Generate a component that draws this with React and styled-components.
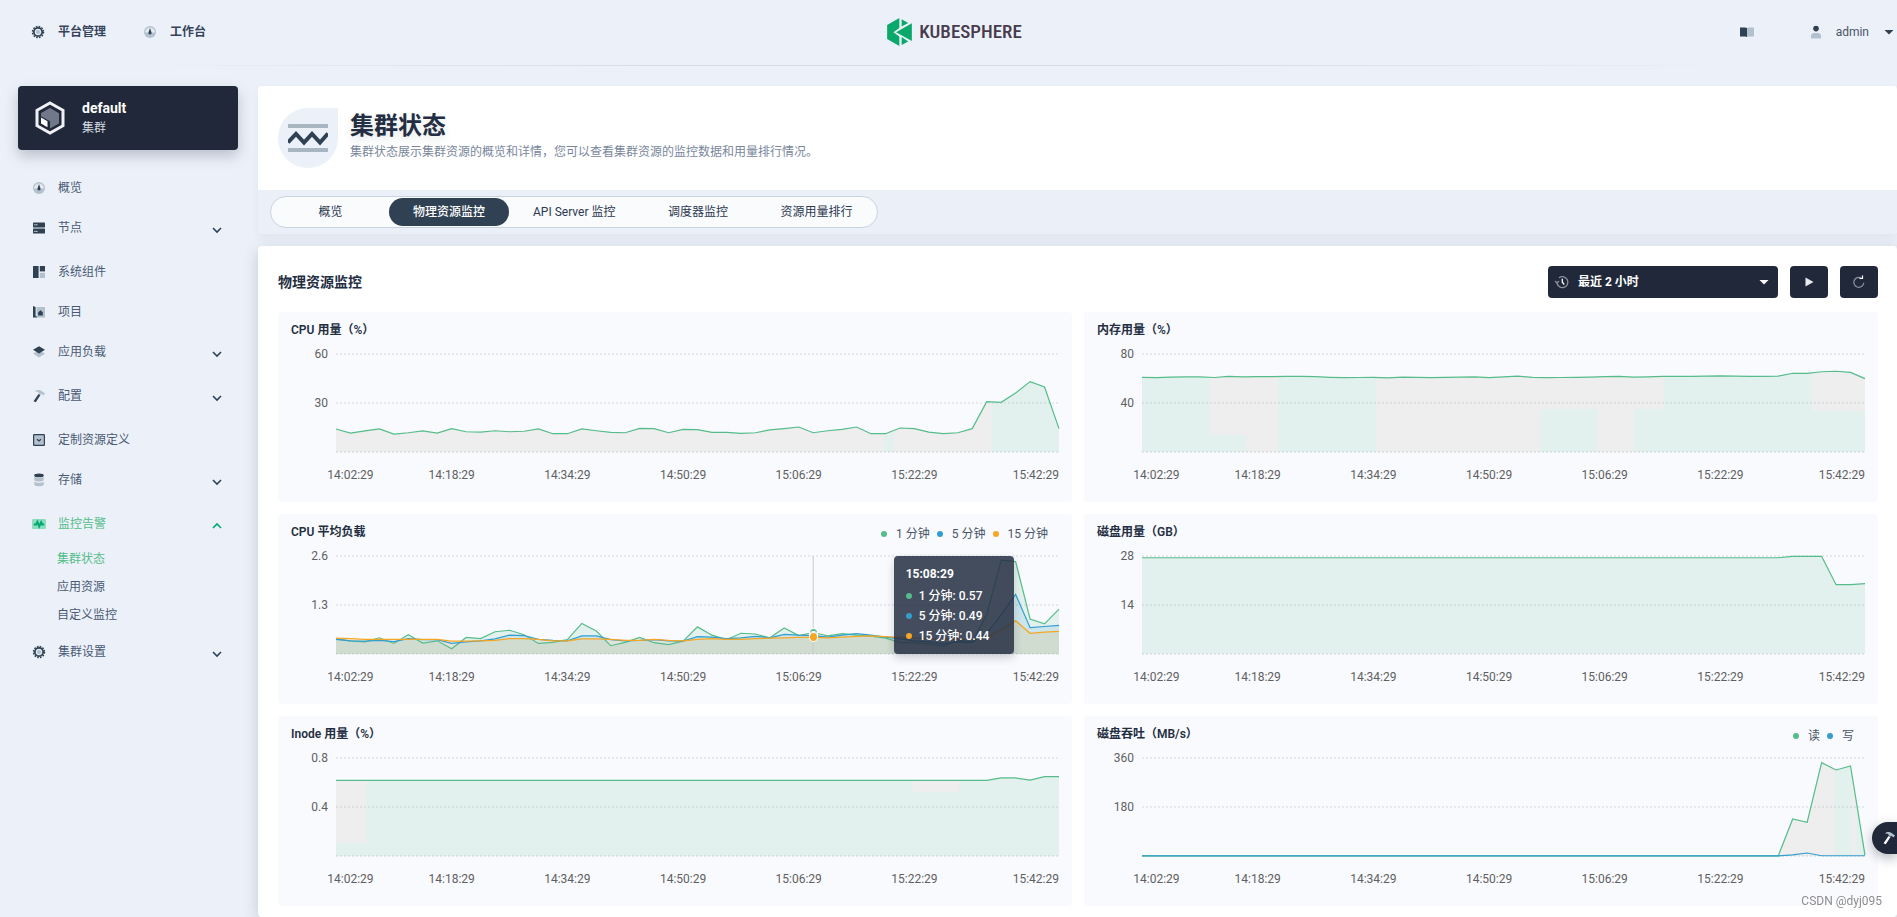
import React, { useId } from 'react';
import styled, { createGlobalStyle, css } from 'styled-components';

const GlobalStyle = createGlobalStyle`
  *, *::before, *::after { box-sizing: border-box; }
  html, body { margin: 0; padding: 0; }
  body {
    background: #ecf1f9;
    color: #242e42;
    font-family: Roboto, "Noto Sans CJK SC", sans-serif;
    font-size: 12px;
    line-height: 20px;
  }
  h1, h2, h3, p, ul { margin: 0; padding: 0; }
  ul { list-style: none; }
  a { color: inherit; text-decoration: none; }
  button, select { font: inherit; cursor: pointer; }
  svg { display: block; flex: none; }
`;

/* ---------- icons ---------- */

const DARK = '#2f4153';
const LIGHT = '#b3c0cd';

const paths = {
  gear: (
    <>
      <circle cx="8" cy="8" r="4.2" fill={LIGHT} stroke="currentColor" strokeWidth="1.7" />
      <circle cx="8" cy="8" r="5.5" fill="none" stroke="currentColor" strokeWidth="1.5" strokeDasharray="1.64 1.24" />
      <circle cx="8" cy="8" r="2.6" fill={LIGHT} stroke="#e9eff6" strokeWidth="1" />
    </>
  ),
  dashboard: (
    <>
      <circle cx="8" cy="8" r="6" fill={LIGHT} />
      <path d="M3 8.6a5 5 0 0 1 10 0z" fill="#e3eaf1" />
      <path d="M8 4l1.5 4.4a1.6 1.6 0 1 1-3 0z" fill="currentColor" />
    </>
  ),
  nodes: (
    <>
      <rect x="2" y="2.6" width="12" height="5" rx=".6" fill="currentColor" />
      <rect x="2" y="8.6" width="12" height="5" rx=".6" fill="currentColor" />
      <path d="M3.3 4.8h1.2M5.2 4.8h1.2M3.3 11.4h1.2M5.2 11.4h1.2" stroke="#fff" strokeWidth="1" />
    </>
  ),
  components: (
    <>
      <rect x="2" y="2" width="5.6" height="12" fill="currentColor" />
      <rect x="8.8" y="2" width="5.2" height="5.4" fill="currentColor" />
      <rect x="8.8" y="8.8" width="5.2" height="5.2" fill={LIGHT} />
    </>
  ),
  project: (
    <>
      <rect x="5.6" y="3" width="8.4" height="10.6" fill={LIGHT} />
      <path d="M2 2l2.6 1v9.2l1.4.4v1H2z" fill="currentColor" />
      <path d="M7.2 11.6V8.2l2.3-2 2.3 2v3.4z" fill="currentColor" />
    </>
  ),
  workload: (
    <>
      <path d="M2 9.6L8 6.4l6 3.2-6 3.8z" fill={LIGHT} />
      <path d="M2 5.8L8 2.2l6 3.6-6 3.6z" fill="currentColor" />
    </>
  ),
  hammer: (
    <>
      <path d="M4 3.4C6 1.4 9 1.6 10.6 3l3.4 2.6-1.6 2-1.8-1.5-1.4.4L7.6 5 7 3.7z" fill={LIGHT} />
      <path d="M7.5 6l2 1.1-4.7 7.1-2.3-.9z" fill="currentColor" />
    </>
  ),
  crd: (
    <>
      <rect x="2.6" y="2.6" width="10.8" height="10.8" rx=".6" fill={LIGHT} stroke="currentColor" strokeWidth="1.2" />
      <path d="M6 7.2l2 1.8 2-1.8" fill="none" stroke="currentColor" strokeWidth="1.2" />
    </>
  ),
  storage: (
    <>
      <path d="M3.2 9.8c2.4 1.4 7.2 1.4 9.6 0v3c-1.6 2-8 2-9.6 0z" fill={LIGHT} />
      <path d="M3.2 5c2.4 1.4 7.2 1.4 9.6 0v3.2c-1.6 1.8-8 1.8-9.6 0z" fill={LIGHT} />
      <ellipse cx="8" cy="3.4" rx="4.8" ry="1.9" fill="currentColor" />
    </>
  ),
  monitor: (
    <>
      <rect x="1" y="3" width="14" height="10" rx="1.2" fill="#8edcc0" />
      <path d="M2.8 8.4h2.4l1.2-2.6 1.8 4.6 2-4.2 1 2.2h2" fill="none" stroke="#00aa72" strokeWidth="2" />
    </>
  ),
  book: (
    <>
      <path d="M1 3.4h5.2L8 4v9l-1.800-.6H1z" fill="currentColor" />
      <path d="M15 3.4H9.8L8 4v9l1.800-.6H15z" fill={LIGHT} />
    </>
  ),
  user: (
    <>
      <circle cx="8" cy="4.6" r="2.8" fill="currentColor" />
      <path d="M3 14.4V12c0-1.8 1.4-3 3.2-3h3.6c1.8 0 3.2 1.2 3.2 3v2.4z" fill={LIGHT} />
    </>
  ),
  chevronDown: <path d="M4 8l4 4 4-4" fill="none" stroke="currentColor" strokeWidth="1.6" />,
  chevronUp: <path d="M4 12l4-4 4 4" fill="none" stroke="currentColor" strokeWidth="1.6" />,
  caret: <path d="M3.5 6h9L8 10.5z" fill="currentColor" />,
  play: <path d="M4.5 3.5L12.5 8l-8 4.5z" fill="#e8eaee" />,
  refresh: (
    <>
      <path d="M12.8 8.8A5 5 0 1 1 9.5 3.6" fill="none" stroke="#8c93a0" strokeWidth="1.2" />
      <path d="M8.500 4.400h3V1.400" fill="none" stroke="#fff" strokeWidth="1.2" />
    </>
  ),
  clock: (
    <>
      <path d="M2.9 8.4A5.5 5.5 0 1 0 5 3.8" fill="none" stroke="#8c93a0" strokeWidth="1.3" />
      <path d="M1 7l2 2 2-2" fill="none" stroke="#8c93a0" strokeWidth="1.2" />
      <path d="M8.3 4.8v3.5l2 2.2" fill="none" stroke="#fff" strokeWidth="1.3" />
    </>
  ),
};

function Icon({ name, size = 16, color = DARK }) {
  return (
    <svg width={size} height={size} viewBox="0 0 16 16" color={color} aria-hidden="true">
      {paths[name]}
    </svg>
  );
}

/* ---------- header ---------- */

const Header = styled.header`
  display: grid;
  grid-template-columns: 1fr auto 1fr;
  align-items: center;
  height: 66px;
  padding: 0 0 2px 12px;
  background: linear-gradient(90deg, transparent 6%, #d3dae4 38%, #d3dae4 60%, transparent 93%) bottom / 100% 1px no-repeat;
`;

const HeaderNav = styled.nav`
  display: flex;
  gap: 36px;
  padding-left: 18px;
`;

const HeaderLink = styled.a`
  display: flex;
  align-items: center;
  gap: 12px;
  color: #36435c;
  font-weight: 600;
`;

const Brand = styled.a`
  display: flex;
  align-items: center;
  gap: 7px;
  color: #473b4d;
  font-family: "Liberation Sans Narrow", "Roboto Condensed", Roboto, sans-serif;
  font-size: 19px;
  font-weight: 500;
`;

const HeaderTools = styled.div`
  display: flex;
  align-items: center;
  justify-content: flex-end;
  gap: 53px;
`;

const PlainButton = styled.button`
  display: flex;
  align-items: center;
  padding: 0;
  border: 0;
  background: none;
  color: #4a5568;
`;

const UserButton = styled(PlainButton)`
  gap: 12px;
`;

/* ---------- sidebar ---------- */

const Body = styled.div`
  display: flex;
  flex: 1;
  padding: 20px 0 0 18px;
  gap: 20px;
`;

const Sidebar = styled.aside`
  flex: none;
  width: 220px;
`;

const ClusterButton = styled.button`
  display: flex;
  align-items: center;
  gap: 16px;
  width: 100%;
  height: 64px;
  padding: 0 16px;
  border: 0;
  border-radius: 4px;
  background: #202839;
  box-shadow: 0 6px 14px rgba(36, 46, 66, 0.25);
  color: #fff;
  text-align: left;
  strong { display: block; font-size: 14px; font-weight: 700; }
  span span { display: block; color: #d5dae2; }
`;

const NavList = styled.ul`
  padding-top: 18px;
`;

const NavItem = styled.li`
  padding-bottom: ${(p) => (p.$open ? '3px' : p.$group ? '4px' : '0')};
`;

const NavRow = styled.a`
  display: flex;
  align-items: center;
  gap: 11px;
  height: 40px;
  padding: 0 13px;
  color: ${(p) => (p.$active ? '#55bc8a' : '#4a5974')};
  & > span { flex: 1; }
`;

const SubList = styled.ul`
  padding-top: 1px;
`;

const SubLink = styled.a`
  display: block;
  padding-left: 39px;
  line-height: 28px;
  color: ${(p) => (p.$active ? '#55bc8a' : '#4a5974')};
`;

/* ---------- main ---------- */

const Main = styled.main`
  display: flex;
  flex: 1;
  flex-direction: column;
  gap: 12px;
  min-width: 0;
`;

const panel = css`
  border-radius: 4px;
  background: #fff;
`;

const Banner = styled.section`
  ${panel}
  overflow: hidden;
  box-shadow: 0 4px 8px rgba(36, 46, 66, 0.06);
`;

const BannerHead = styled.div`
  display: flex;
  gap: 12px;
  padding: 22px 20px;
`;

const BannerIcon = styled.div`
  display: grid;
  place-items: center;
  width: 60px;
  height: 60px;
  border-radius: 30px 0 30px 30px;
  background: #ecf1f9;
`;

const BannerTitle = styled.h1`
  font-size: 24px;
  font-weight: 700;
  line-height: 36px;
  text-shadow: 0 4px 8px rgba(36, 46, 66, 0.12);
`;

const BannerText = styled.p`
  color: #79879c;
  line-height: 16px;
`;

const TabBar = styled.div`
  display: flex;
  padding: 6px 12px;
  background: #ebf0f8;
`;

const Tabs = styled.div`
  display: flex;
  padding: 1px;
  border: 1px solid #c9d3df;
  border-radius: 16px;
  background: #fafbfd;
`;

const Tab = styled.button`
  height: 28px;
  min-width: 117px;
  padding: 0 24px;
  border: 0;
  border-radius: 14px;
  background: ${(p) => (p.$active ? DARK : 'transparent')};
  color: ${(p) => (p.$active ? '#fff' : '#2c3850')};
  font-weight: ${(p) => (p.$active ? 500 : 400)};
`;

const Content = styled.section`
  ${panel}
  flex: 1;
  padding: 20px 19px 11px 20px;
  box-shadow: 0 4px 16px rgba(36, 46, 66, 0.2);
`;

const Toolbar = styled.div`
  display: flex;
  align-items: center;
  gap: 12px;
  padding-bottom: 14px;
`;

const SectionTitle = styled.h2`
  flex: 1;
  font-size: 14px;
  font-weight: 600;
`;

const RangeBox = styled.label`
  display: flex;
  align-items: center;
  gap: 8px;
  width: 230px;
  height: 32px;
  padding: 0 6px;
  border-radius: 4px;
  background: #202839;
`;

const RangeSelect = styled.select`
  flex: 1;
  height: 32px;
  padding: 0;
  border: 0;
  outline: 0;
  appearance: none;
  background: transparent;
  color: #fff;
  font-weight: 700;
`;

const DarkButton = styled.button`
  display: grid;
  place-items: center;
  width: 38px;
  height: 32px;
  padding: 0;
  border: 0;
  border-radius: 4px;
  background: #202839;
`;

const ChartGrid = styled.div`
  display: grid;
  grid-template-columns: repeat(2, minmax(0, 1fr));
  gap: 12px;
`;

const Card = styled.article`
  padding: 8px 13px 17px;
  border-radius: 4px;
  background: #f9fafd;
`;

const CardHead = styled.div`
  display: flex;
  justify-content: space-between;
  padding: 0 11px 14px 0;
`;

const CardTitle = styled.h3`
  font-size: 12px;
  font-weight: 600;
`;

const Legend = styled.ul`
  display: flex;
  gap: 7px;
  padding-top: 2px;
  margin-bottom: -2px;
  color: #4a5568;
`;

const Key = styled.li`
  display: flex;
  align-items: center;
  gap: ${(p) => p.$gap || '9px'};
  &::before {
    content: '';
    width: 6px;
    height: 6px;
    border-radius: 50%;
    background: ${(p) => p.$color};
  }
`;

const ChartBody = styled.div`
  display: grid;
  grid-template-columns: 37px minmax(0, 1fr);
  column-gap: 8px;
  row-gap: 13px;
  color: #5f5f62;
`;

const YAxis = styled.div`
  display: grid;
  grid-auto-rows: 49px;
  height: 98px;
  margin-top: -8px;
  line-height: 16px;
  text-align: right;
`;

const Plot = styled.div`
  position: relative;
  height: 98px;
  & > svg { width: 100%; height: 98px; overflow: visible; }
`;

const XAxis = styled.div`
  display: grid;
  grid-column: 2;
  grid-template-columns: minmax(0, 2fr) minmax(0, 2fr) repeat(5, minmax(0, 8fr)) minmax(0, 6fr);
  & > span { justify-self: center; }
  & > :first-child { grid-column: 1; }
  & > :nth-child(2) { grid-column: 3; }
  & > :last-child { justify-self: end; }
`;

const Marker = styled.span`
  position: absolute;
  width: 9px;
  height: 10px;
  margin: -5px 0 0 -4px;
  border: 1px solid #fff;
  border-radius: 50%;
  background: ${(p) => p.$color};
`;

const Tooltip = styled.div`
  position: absolute;
  top: 0;
  left: calc(77% + 1px);
  width: 120px;
  height: 98px;
  padding: 8px 12px;
  border-radius: 4px;
  background: rgba(36, 46, 66, 0.85);
  box-shadow: 0 4px 8px rgba(36, 46, 66, 0.2);
  color: #fff;
  font-weight: 500;
  strong { display: block; padding-bottom: 2px; }
`;

const FloatButton = styled.button`
  position: fixed;
  right: 0;
  bottom: 63px;
  display: flex;
  align-items: center;
  width: 25px;
  height: 32px;
  padding: 0 0 0 9px;
  border: 0;
  border-radius: 16px 0 0 16px;
  background: #202839;
  box-shadow: 0 4px 12px rgba(36, 46, 66, 0.35);
`;

const Watermark = styled.div`
  position: fixed;
  right: 15px;
  bottom: 6px;
  color: #8d8d90;
  text-shadow: 1px 1px 0 #fff;
`;

/* ---------- data ---------- */

const GREEN = '#55bc8a';
const BLUE = '#329dce';
const ORANGE = '#f5a623';
const repeat = (n, v) => Array(n).fill(v);

const times = ['14:02:29', '14:18:29', '14:34:29', '14:50:29', '15:06:29', '15:22:29', '15:42:29'];

const charts = [
  {
    title: 'CPU 用量（%）',
    max: 60,
    shades: [[0, 37.9, 0, 98], [38.6, 45.3, 0, 98]],
    series: [{
      color: GREEN,
      values: [14.1, 11.6, 12.9, 14.1, 11, 11.8, 12.9, 11.6, 14.3, 12.4, 12.2, 13, 12.4, 12.7, 14.1, 11.2, 11.2, 14.1, 13, 12, 11.8, 14.5, 14.3, 11.8, 13.9, 13.7, 12, 12, 11.4, 11.8, 13.5, 14.3, 15.3, 11.8, 13, 13.9, 15.3, 11.2, 11.2, 14.7, 14.3, 12.2, 11.2, 11.8, 14.3, 30.8, 30.4, 36.1, 43.1, 39.8, 14.3],
    }],
  },
  {
    title: '内存用量（%）',
    max: 80,
    shades: [[4.7, 7.2, 0, 81], [7.2, 9.4, 0, 98], [16.2, 27.5, 0, 98], [27.5, 31.5, 0, 55], [31.5, 34, 0, 98], [34, 36.1, 0, 55], [46.3, 50, 0, 57]],
    series: [{
      color: GREEN,
      values: [61, 60.7, 61.2, 61.3, 61.4, 60.8, 61.7, 61.3, 61.6, 61.6, 61.7, 61.8, 61.5, 61, 60.7, 60.8, 61, 60.5, 61.2, 60.9, 60.7, 60.9, 61.2, 61.4, 60.7, 61.3, 61.9, 61, 60.7, 60.8, 61, 61.2, 61.6, 61.8, 61.1, 61.4, 61.7, 61.7, 61.7, 62, 62.1, 61.9, 61.7, 61.7, 62, 64.3, 64.2, 65.5, 65.9, 65, 59.9],
    }],
  },
  {
    title: 'CPU 平均负载',
    max: 2.6,
    shades: [],
    active: 33,
    activeTime: '15:08:29',
    series: [
      {
        name: '1 分钟', color: GREEN,
        values: [0.4, 0.35, 0.32, 0.43, 0.28, 0.51, 0.29, 0.35, 0.14, 0.44, 0.41, 0.59, 0.63, 0.51, 0.28, 0.31, 0.38, 0.81, 0.61, 0.22, 0.31, 0.44, 0.3, 0.25, 0.34, 0.72, 0.5, 0.38, 0.55, 0.53, 0.43, 0.69, 0.49, 0.57, 0.48, 0.54, 0.5, 0.47, 0.42, 0.31, 0.3, 0.26, 0.21, 0.37, 0.32, 1.05, 2.49, 2.45, 0.93, 0.8, 1.19],
      },
      {
        name: '5 分钟', color: BLUE,
        values: [0.39, 0.35, 0.34, 0.36, 0.33, 0.41, 0.38, 0.38, 0.28, 0.32, 0.35, 0.4, 0.5, 0.49, 0.39, 0.36, 0.35, 0.48, 0.48, 0.38, 0.35, 0.36, 0.38, 0.35, 0.34, 0.46, 0.45, 0.41, 0.43, 0.47, 0.43, 0.52, 0.5, 0.49, 0.45, 0.5, 0.54, 0.5, 0.45, 0.4, 0.35, 0.32, 0.27, 0.32, 0.31, 0.55, 1.04, 1.58, 0.7, 0.73, 0.76],
      },
      {
        name: '15 分钟', color: ORANGE,
        values: [0.42, 0.41, 0.39, 0.39, 0.39, 0.39, 0.39, 0.39, 0.34, 0.34, 0.35, 0.36, 0.41, 0.41, 0.39, 0.35, 0.35, 0.4, 0.4, 0.39, 0.36, 0.36, 0.39, 0.36, 0.35, 0.39, 0.41, 0.39, 0.39, 0.41, 0.42, 0.43, 0.44, 0.44, 0.43, 0.45, 0.47, 0.48, 0.46, 0.44, 0.42, 0.41, 0.39, 0.39, 0.39, 0.44, 0.64, 0.88, 0.55, 0.58, 0.6],
      },
    ],
  },
  {
    title: '磁盘用量（GB）',
    max: 28,
    shades: [],
    series: [{ color: GREEN, values: [...repeat(45, 27.5), 27.9, 27.9, 27.9, 19.8, 19.8, 20.1] }],
  },
  {
    title: 'Inode 用量（%）',
    max: 0.8,
    shades: [[0, 2.1, 0, 85], [39.9, 43.1, 0, 34]],
    series: [{ color: GREEN, values: [...repeat(46, 0.618), 0.637, 0.637, 0.62, 0.648, 0.648] }],
  },
  {
    title: '磁盘吞吐（MB/s）',
    max: 360,
    shades: [[44, 47.9, 0, 98], [49.1, 49.4, 0, 98]],
    series: [
      { name: '读', color: GREEN, values: [...repeat(45, 0.5), 136, 124, 343, 316, 331, 3] },
      { name: '写', color: BLUE, values: [...repeat(45, 0.5), 4, 11, 1, 1, 1, 1] },
    ],
  },
];

const nav = [
  { label: '概览', icon: 'dashboard' },
  { label: '节点', icon: 'nodes', group: true },
  { label: '系统组件', icon: 'components' },
  { label: '项目', icon: 'project' },
  { label: '应用负载', icon: 'workload', group: true },
  { label: '配置', icon: 'hammer', group: true },
  { label: '定制资源定义', icon: 'crd' },
  { label: '存储', icon: 'storage', group: true },
  { label: '监控告警', icon: 'monitor', group: true, open: true, children: ['集群状态', '应用资源', '自定义监控'] },
  { label: '集群设置', icon: 'gear', group: true },
];

const tabs = ['概览', '物理资源监控', 'API Server 监控', '调度器监控', '资源用量排行'];

/* ---------- chart ---------- */

const HEIGHT = 98;

function Chart({ title, max, series, shades, active, activeTime }) {
  const clipId = useId();
  const yOf = (v) => HEIGHT - (v / max) * HEIGHT;
  const line = (values) => values.map((v, i) => `${i},${yOf(v).toFixed(2)}`).join(' ');
  const area = (values) => `0,${HEIGHT} ${line(values)} 50,${HEIGHT}`;
  const named = series.filter((s) => s.name);

  return (
    <Card>
      <CardHead>
        <CardTitle>{title}</CardTitle>
        {named.length > 0 && (
          <Legend>
            {named.map((s) => <Key key={s.name} $color={s.color}>{s.name}</Key>)}
          </Legend>
        )}
      </CardHead>
      <ChartBody>
        <YAxis>
          <span>{max}</span>
          <span>{max / 2}</span>
        </YAxis>
        <Plot>
          <svg viewBox={`0 0 50 ${HEIGHT}`} preserveAspectRatio="none" role="img" aria-label={title}>
            <clipPath id={clipId}>
              <polygon points={area(series[0].values)} />
            </clipPath>
            {series.map((s) => (
              <polygon key={s.color} points={area(s.values)} fill={s.color} fillOpacity="0.13" />
            ))}
            <g clipPath={`url(#${clipId})`}>
              {shades.map(([x0, x1, y0, y1]) => (
                <rect key={x0} x={x0} y={y0} width={x1 - x0} height={y1 - y0} fill="#eeeeee" />
              ))}
            </g>
            {[0, HEIGHT / 2, HEIGHT].map((y) => (
              <line key={y} x1="0" x2="50" y1={y} y2={y} stroke="#8c96a5" strokeOpacity="0.24" strokeWidth="1.5" strokeDasharray="2 2" vectorEffect="non-scaling-stroke" />
            ))}
            {active !== undefined && (
              <line x1={active} x2={active} y1="0" y2={HEIGHT} stroke="#cccccc" vectorEffect="non-scaling-stroke" />
            )}
            {series.map((s) => (
              <polyline key={s.color} points={line(s.values)} fill="none" stroke={s.color} strokeWidth="1.2" vectorEffect="non-scaling-stroke" />
            ))}
          </svg>
          {active !== undefined && (
            <>
              {series.map((s) => (
                <Marker key={s.name} $color={s.color} style={{ left: `${active * 2}%`, top: yOf(s.values[active]) }} />
              ))}
              <Tooltip role="tooltip">
                <strong>{activeTime}</strong>
                <ul>
                  {series.map((s) => (
                    <Key key={s.name} $color={s.color} $gap="7px">{`${s.name}: ${s.values[active]}`}</Key>
                  ))}
                </ul>
              </Tooltip>
            </>
          )}
        </Plot>
        <XAxis>
          {times.map((t) => <span key={t}>{t}</span>)}
        </XAxis>
      </ChartBody>
    </Card>
  );
}

/* ---------- page ---------- */

const Page = styled.div`
  display: flex;
  flex-direction: column;
  min-height: 100vh;
`;

export default function App() {
  return (
    <Page>
      <GlobalStyle />
      <Header>
        <HeaderNav>
          <HeaderLink href="#platform"><Icon name="gear" />平台管理</HeaderLink>
          <HeaderLink href="#workbench"><Icon name="dashboard" />工作台</HeaderLink>
        </HeaderNav>
        <Brand href="#home">
          <svg width="25" height="28" viewBox="0 0 75 85" aria-hidden="true" fill="#0ba86b">
            <path d="M0 21L37 0v30L19 43l18 13v29L0 64z" />
            <path d="M44 4l20 11-20 11zM27 43l48-27v54zM44 58l20 13-20 11z" />
          </svg>
          KUBESPHERE
        </Brand>
        <HeaderTools>
          <PlainButton aria-label="文档"><Icon name="book" /></PlainButton>
          <UserButton>
            <Icon name="user" />
            <span>admin</span>
            <Icon name="caret" />
          </UserButton>
        </HeaderTools>
      </Header>

      <Body>
        <Sidebar>
          <ClusterButton>
            <svg width="32" height="34" viewBox="0 0 32 34" aria-hidden="true">
              <path d="M16 2l13 7.3v15.4L16 32 3 24.7V9.3z" fill="none" stroke="#f0f1f4" strokeWidth="3" />
              <path d="M16 7l9 5.2v10.2L16 27.5v-7.2l-9-5V12z" fill="#70788a" />
              <path d="M7 16.5l6.5 3.8v6L7 22.5z" fill="#fff" />
            </svg>
            <span>
              <strong>default</strong>
              <span>集群</span>
            </span>
          </ClusterButton>
          <nav>
            <NavList>
              {nav.map((item) => (
                <NavItem key={item.label} $group={item.group} $open={item.open}>
                  <NavRow href={`#${item.icon}`} $active={item.open}>
                    <Icon name={item.icon} />
                    <span>{item.label}</span>
                    {item.group && (
                      <Icon name={item.open ? 'chevronUp' : 'chevronDown'} color={item.open ? '#00aa72' : DARK} />
                    )}
                  </NavRow>
                  {item.children && (
                    <SubList>
                      {item.children.map((label, i) => (
                        <li key={label}><SubLink href={`#monitor-${i}`} $active={i === 0}>{label}</SubLink></li>
                      ))}
                    </SubList>
                  )}
                </NavItem>
              ))}
            </NavList>
          </nav>
        </Sidebar>

        <Main>
          <Banner>
            <BannerHead>
              <BannerIcon>
                <svg width="40" height="28" viewBox="0 0 40 28" aria-hidden="true">
                  <path d="M0 2h40M0 26h40" stroke="#a9b5c1" strokeWidth="4" />
                  <path d="M0 18.5l8-8.5 8 8.5L24 10l8 8.5 8-9" fill="none" stroke={DARK} strokeWidth="4" />
                </svg>
              </BannerIcon>
              <div>
                <BannerTitle>集群状态</BannerTitle>
                <BannerText>集群状态展示集群资源的概览和详情，您可以查看集群资源的监控数据和用量排行情况。</BannerText>
              </div>
            </BannerHead>
            <TabBar>
              <Tabs role="tablist">
                {tabs.map((label, i) => (
                  <Tab key={label} role="tab" aria-selected={i === 1} $active={i === 1}>{label}</Tab>
                ))}
              </Tabs>
            </TabBar>
          </Banner>

          <Content>
            <Toolbar>
              <SectionTitle>物理资源监控</SectionTitle>
              <RangeBox>
                <Icon name="clock" />
                <RangeSelect aria-label="时间范围" defaultValue="2h">
                  <option value="2h">最近 2 小时</option>
                </RangeSelect>
                <Icon name="caret" color="#fff" />
              </RangeBox>
              <DarkButton aria-label="开始"><Icon name="play" /></DarkButton>
              <DarkButton aria-label="刷新"><Icon name="refresh" /></DarkButton>
            </Toolbar>
            <ChartGrid>
              {charts.map((chart) => <Chart key={chart.title} {...chart} />)}
            </ChartGrid>
          </Content>
        </Main>
      </Body>

      <FloatButton aria-label="工具箱"><Icon name="hammer" color="#fff" /></FloatButton>
      <Watermark>CSDN @dyj095</Watermark>
    </Page>
  );
}
